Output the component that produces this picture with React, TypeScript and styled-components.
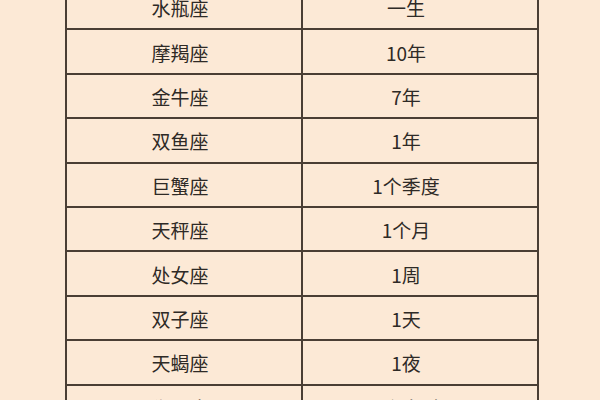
import React from "react";
import styled, { createGlobalStyle } from "styled-components";

const GlobalStyle = createGlobalStyle`
  html, body {
    margin: 0;
    padding: 0;
    background: #fce9d6;
  }
  body {
    font-family: "Noto Sans CJK SC", "Noto Sans", sans-serif;
  }
`;

const Page = styled.div`
  width: 600px;
  height: 400px;
  overflow: hidden;
  background: #fce9d6;
`;

const Table = styled.div`
  width: 474px;
  margin: -14px 0 0 65px;
  border-left: 2px solid #4a3e34;
  border-right: 2px solid #4a3e34;
  box-sizing: border-box;
`;

const Row = styled.div`
  display: grid;
  grid-template-columns: 236px 1fr;
  height: 44.4px;
  box-sizing: border-box;
  border-bottom: 2px solid #4a3e34;
`;

const Cell = styled.div<{ $divider?: boolean; $shift: number }>`
  display: flex;
  align-items: center;
  justify-content: center;
  padding-top: 1px;
  padding-right: ${(p) => p.$shift * 2}px;
  font-size: 19px;
  line-height: 1;
  color: #2e2a26;
  border-right: ${(p) => (p.$divider ? "2px solid #4a3e34" : "none")};
`;

const rows: [string, string][] = [
  ["水瓶座", "一生"],
  ["摩羯座", "10年"],
  ["金牛座", "7年"],
  ["双鱼座", "1年"],
  ["巨蟹座", "1个季度"],
  ["天秤座", "1个月"],
  ["处女座", "1周"],
  ["双子座", "1天"],
  ["天蝎座", "1夜"],
  ["狮子座", "1个小时"],
];

const App = (): React.ReactElement => {
  return (
    <Page>
      <GlobalStyle />
      <Table>
        {rows.map(([sign, time]) => (
          <Row key={sign}>
            <Cell $divider $shift={4}>{sign}</Cell>
            <Cell $shift={14}>{time}</Cell>
          </Row>
        ))}
      </Table>
    </Page>
  );
};

export default App;
